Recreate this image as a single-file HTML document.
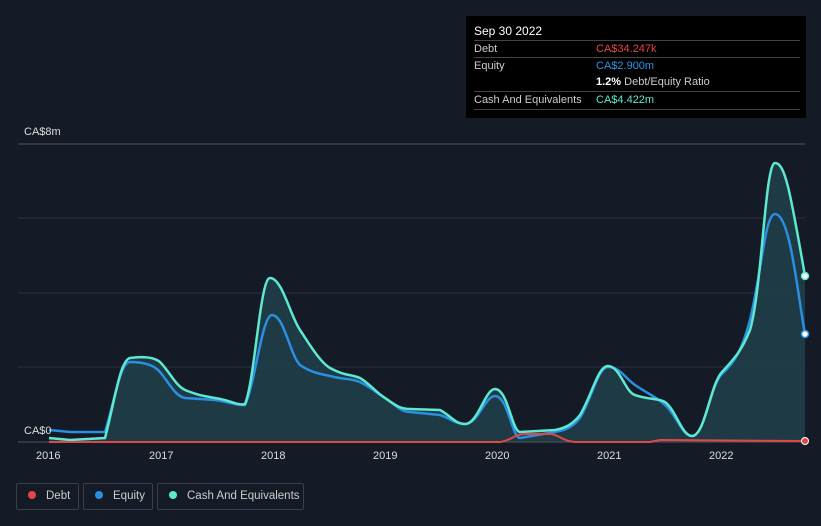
<!DOCTYPE html>
<html><head><style>
html,body{margin:0;width:821px;height:526px;overflow:hidden}
body{background:#151b26;font-family:"Liberation Sans",sans-serif;position:relative}
.tt{position:absolute;left:466px;top:16px;width:340px;height:102px;background:#000;color:#ccc;font-size:11px}
.r{position:absolute;left:8px;width:326px;border-top:1px solid #444;height:16px;line-height:16px}
.lg{position:absolute;top:483px;height:27px;border:1px solid #3a3f4a;border-radius:2px;color:#ccc;font-size:11.5px;line-height:25px;box-sizing:border-box;white-space:nowrap}
.dot{display:inline-block;width:8px;height:8px;border-radius:50%;margin:0 10px 0 11px;vertical-align:0px}
.ax{position:absolute;top:450px;color:#ddd;font-size:11px}
</style></head><body>
<svg width="821" height="526" style="position:absolute;left:0;top:0">
<g stroke="#2c3240" stroke-width="1"><line x1="18" y1="144" x2="805" y2="144" stroke="#555"/><line x1="18" y1="218" x2="805" y2="218"/><line x1="18" y1="293" x2="805" y2="293"/><line x1="18" y1="367" x2="805" y2="367"/></g>
<path d="M49,438 L70,440 L105,438 C115,400 120,360 130,358 C145,356 155,358 160,362 C170,372 175,385 185,390 C200,396 205,396 215,398 C230,400 238,406 245,404 C255,380 260,278 270,278 C282,278 290,315 300,330 C310,345 320,362 330,368 C345,376 350,374 360,378 C370,384 378,394 385,398 C395,405 400,409 410,409 L440,410 C450,415 455,424 465,424 C478,424 485,389 495,389 C508,389 512,432 520,432 L555,430 C565,428 572,425 580,415 C592,395 598,366 608,366 C620,366 625,392 635,395 C650,400 658,398 665,402 C676,410 682,436 692,436 C705,436 710,385 722,372 C735,358 742,350 750,330 C762,290 765,163 775,163 C785,163 790,190 805,276 L805,442 L49,442Z" fill="#1f3f4b" fill-opacity="0.85"/>
<path d="M49,430 L70,432 L105,432 C115,400 120,362 130,362 C145,362 155,366 160,372 C170,384 175,396 185,398 L215,400 C230,402 238,406 245,405 C255,385 262,315 272,315 C284,315 290,355 300,365 C310,372 320,374 330,376 C345,380 350,378 360,382 C372,388 378,394 385,398 C395,404 400,412 410,412 L440,415 C450,418 455,424 465,424 C478,424 485,396 495,396 C508,396 512,438 520,438 L555,432 C565,430 572,428 580,418 C592,398 598,367 608,367 C620,367 625,378 635,385 C650,395 658,398 665,405 C676,414 682,436 692,436 C705,436 710,385 722,374 C735,362 742,350 750,320 C762,270 765,214 775,214 C790,214 797,290 805,334" fill="none" stroke="#2a8fe0" stroke-width="2.5"/>
<path d="M49,438 L70,440 L105,438 C115,400 120,360 130,358 C145,356 155,358 160,362 C170,372 175,385 185,390 C200,396 205,396 215,398 C230,400 238,406 245,404 C255,380 260,278 270,278 C282,278 290,315 300,330 C310,345 320,362 330,368 C345,376 350,374 360,378 C370,384 378,394 385,398 C395,405 400,409 410,409 L440,410 C450,415 455,424 465,424 C478,424 485,389 495,389 C508,389 512,432 520,432 L555,430 C565,428 572,425 580,415 C592,395 598,366 608,366 C620,366 625,392 635,395 C650,400 658,398 665,402 C676,410 682,436 692,436 C705,436 710,385 722,372 C735,358 742,350 750,330 C762,290 765,163 775,163 C785,163 790,190 805,276" fill="none" stroke="#5ee8d0" stroke-width="2.5"/>
<line x1="18" y1="442" x2="805" y2="442" stroke="#555"/>
<path d="M49,442 L500,442 C510,441 515,434 525,434 L550,434 C558,434 562,441 575,442 L650,442 L660,440 L805,441" fill="none" stroke="#e04848" stroke-width="2"/>
<circle cx="805" cy="276" r="3.5" fill="#fff" stroke="#5ee8d0" stroke-width="1.5"/>
<circle cx="805" cy="334" r="3.5" fill="#fff" stroke="#2a8fe0" stroke-width="1.5"/>
<circle cx="805" cy="441" r="3.5" fill="#e04848" stroke="#fff" stroke-width="1"/>
</svg>
<div style="position:absolute;left:24px;top:126px;color:#ddd;font-size:11px">CA$8m</div>
<div style="position:absolute;left:24px;top:425px;color:#ddd;font-size:11px">CA$0</div>
<div class="ax" style="left:36px">2016</div><div class="ax" style="left:149px">2017</div><div class="ax" style="left:261px">2018</div><div class="ax" style="left:373px">2019</div><div class="ax" style="left:485px">2020</div><div class="ax" style="left:597px">2021</div><div class="ax" style="left:709px">2022</div>
<div class="tt">
<div style="position:absolute;left:8px;top:8px;color:#fff;font-size:12px">Sep 30 2022</div>
<div class="r" style="top:24px">Debt<span style="position:absolute;left:122px;color:#e84545">CA$34.247k</span></div>
<div class="r" style="top:41px">Equity<span style="position:absolute;left:122px;color:#2a96e8">CA$2.900m</span></div>
<div class="r" style="top:58px;border:0"><span style="position:absolute;left:122px"><b style="color:#fff">1.2%</b> Debt/Equity Ratio</span></div>
<div class="r" style="top:75px">Cash And Equivalents<span style="position:absolute;left:122px;color:#5ee8d0">CA$4.422m</span></div>
<div class="r" style="top:93px"></div>
</div>
<div class="lg" style="left:16px;width:63px"><span class="dot" style="background:#e04848"></span>Debt</div>
<div class="lg" style="left:83px;width:70px"><span class="dot" style="background:#2a8fe0"></span>Equity</div>
<div class="lg" style="left:157px;width:147px"><span class="dot" style="background:#5ee8d0"></span>Cash And Equivalents</div>
</body></html>
